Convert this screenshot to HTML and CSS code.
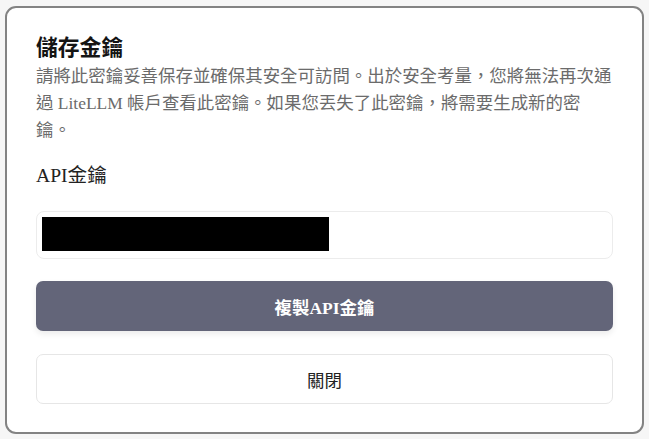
FILE: index.html
```html
<!DOCTYPE html>
<html lang="zh-Hant">
<head>
<meta charset="utf-8">
<title>儲存金鑰</title>
<link rel="stylesheet" href="styles.css">
</head>
<body>
<div class="modal">
  <h2 class="modal-title">儲存金鑰</h2>
  <p class="modal-desc">請將此密鑰妥善保存並確保其安全可訪問。出於安全考量，您將無法再次通過 LiteLLM 帳戶查看此密鑰。如果您丟失了此密鑰，將需要生成新的密鑰。</p>
  <div class="field-label">API金鑰</div>
  <div class="key-box"><span class="key-mask"></span></div>
  <button class="btn btn-primary">複製API金鑰</button>
  <button class="btn btn-close">關閉</button>
</div>
</body>
</html>
```
FILE: styles.css
```css
html, body {margin: 0; padding: 0; height: 100%;}
body {background: #f6f6f6; font-family: "Liberation Serif", "Noto Sans CJK TC", serif; padding: 6px 5px 5px 5px; box-sizing: border-box;}
.modal {box-sizing: border-box; width: 639px; height: 428px; background: #fff; border: 2px solid #838383; border-radius: 11px; padding: 23px 29px 0 29px;}
.modal-title {margin: 0; font-family: "Noto Sans CJK TC", sans-serif; font-size: 21.8px; line-height: 30px; font-weight: 700; color: #141414;}
.modal-desc {margin: 2px 0 0 0; font-size: 17.45px; line-height: 27px; color: #6b6b6b; width: 577px;}
.field-label {margin-top: 18px; font-size: 19.6px; line-height: 28px; color: #222;}
.key-box {box-sizing: border-box; margin-top: 21px; height: 48px; border: 1px solid #ececec; border-radius: 8px; padding: 5px;}
.key-mask {display: block; width: 287px; height: 34px; background: #000;}
.btn {display: block; box-sizing: border-box; width: 577px; height: 50px; border-radius: 7px; font-family: "Liberation Serif", "Noto Sans CJK TC", serif; font-size: 17.45px; cursor: pointer;}
.btn-primary {margin-top: 22px; background: #636579; border: none; color: #fff; font-weight: 700; box-shadow: 0 3px 6px rgba(0,0,0,0.08);}
.btn-close {margin-top: 23px; background: #fff; border: 1px solid #e6e6e6; color: #222;}
```
